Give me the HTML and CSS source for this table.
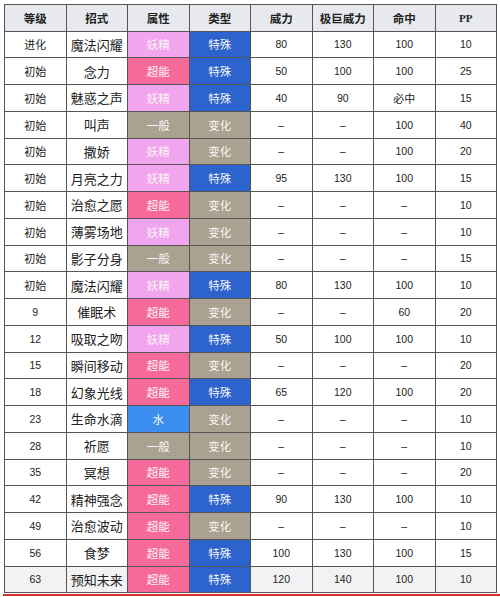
FILE: index.html
```html
<!DOCTYPE html>
<html lang="zh">
<head>
<meta charset="utf-8">
<link rel="stylesheet" href="styles.css">
</head>
<body>
<div class="wrap">
<table class="moves">
<thead>
<tr><th>等级</th><th>招式</th><th>属性</th><th>类型</th><th>威力</th><th>极巨威力</th><th>命中</th><th class="pp">PP</th></tr>
</thead>
<tbody>
<tr><td class="lv">进化</td><td class="nm">魔法闪耀</td><td class="t fairy">妖精</td><td class="t sp">特殊</td><td class="n">80</td><td class="n">130</td><td class="n">100</td><td class="n">10</td></tr>
<tr><td class="lv">初始</td><td class="nm">念力</td><td class="t psy">超能</td><td class="t sp">特殊</td><td class="n">50</td><td class="n">100</td><td class="n">100</td><td class="n">25</td></tr>
<tr><td class="lv">初始</td><td class="nm">魅惑之声</td><td class="t fairy">妖精</td><td class="t sp">特殊</td><td class="n">40</td><td class="n">90</td><td class="lv">必中</td><td class="n">15</td></tr>
<tr><td class="lv">初始</td><td class="nm">叫声</td><td class="t nor">一般</td><td class="t st">变化</td><td class="n">–</td><td class="n">–</td><td class="n">100</td><td class="n">40</td></tr>
<tr><td class="lv">初始</td><td class="nm">撒娇</td><td class="t fairy">妖精</td><td class="t st">变化</td><td class="n">–</td><td class="n">–</td><td class="n">100</td><td class="n">20</td></tr>
<tr><td class="lv">初始</td><td class="nm">月亮之力</td><td class="t fairy">妖精</td><td class="t sp">特殊</td><td class="n">95</td><td class="n">130</td><td class="n">100</td><td class="n">15</td></tr>
<tr><td class="lv">初始</td><td class="nm">治愈之愿</td><td class="t psy">超能</td><td class="t st">变化</td><td class="n">–</td><td class="n">–</td><td class="n">–</td><td class="n">10</td></tr>
<tr><td class="lv">初始</td><td class="nm">薄雾场地</td><td class="t fairy">妖精</td><td class="t st">变化</td><td class="n">–</td><td class="n">–</td><td class="n">–</td><td class="n">10</td></tr>
<tr><td class="lv">初始</td><td class="nm">影子分身</td><td class="t nor">一般</td><td class="t st">变化</td><td class="n">–</td><td class="n">–</td><td class="n">–</td><td class="n">15</td></tr>
<tr><td class="lv">初始</td><td class="nm">魔法闪耀</td><td class="t fairy">妖精</td><td class="t sp">特殊</td><td class="n">80</td><td class="n">130</td><td class="n">100</td><td class="n">10</td></tr>
<tr><td class="n">9</td><td class="nm">催眠术</td><td class="t psy">超能</td><td class="t st">变化</td><td class="n">–</td><td class="n">–</td><td class="n">60</td><td class="n">20</td></tr>
<tr><td class="n">12</td><td class="nm">吸取之吻</td><td class="t fairy">妖精</td><td class="t sp">特殊</td><td class="n">50</td><td class="n">100</td><td class="n">100</td><td class="n">10</td></tr>
<tr><td class="n">15</td><td class="nm">瞬间移动</td><td class="t psy">超能</td><td class="t st">变化</td><td class="n">–</td><td class="n">–</td><td class="n">–</td><td class="n">20</td></tr>
<tr><td class="n">18</td><td class="nm">幻象光线</td><td class="t psy">超能</td><td class="t sp">特殊</td><td class="n">65</td><td class="n">120</td><td class="n">100</td><td class="n">20</td></tr>
<tr><td class="n">23</td><td class="nm">生命水滴</td><td class="t water">水</td><td class="t st">变化</td><td class="n">–</td><td class="n">–</td><td class="n">–</td><td class="n">10</td></tr>
<tr><td class="n">28</td><td class="nm">祈愿</td><td class="t nor">一般</td><td class="t st">变化</td><td class="n">–</td><td class="n">–</td><td class="n">–</td><td class="n">10</td></tr>
<tr><td class="n">35</td><td class="nm">冥想</td><td class="t psy">超能</td><td class="t st">变化</td><td class="n">–</td><td class="n">–</td><td class="n">–</td><td class="n">20</td></tr>
<tr><td class="n">42</td><td class="nm">精神强念</td><td class="t psy">超能</td><td class="t sp">特殊</td><td class="n">90</td><td class="n">130</td><td class="n">100</td><td class="n">10</td></tr>
<tr><td class="n">49</td><td class="nm">治愈波动</td><td class="t psy">超能</td><td class="t st">变化</td><td class="n">–</td><td class="n">–</td><td class="n">–</td><td class="n">10</td></tr>
<tr><td class="n">56</td><td class="nm">食梦</td><td class="t psy">超能</td><td class="t sp">特殊</td><td class="n">100</td><td class="n">130</td><td class="n">100</td><td class="n">15</td></tr>
<tr class="last"><td class="n">63</td><td class="nm">预知未来</td><td class="t psy">超能</td><td class="t sp">特殊</td><td class="n">120</td><td class="n">140</td><td class="n">100</td><td class="n">10</td></tr>
</tbody>
</table>
<div class="redline"></div>
</div>
</body>
</html>
```
FILE: styles.css
```css
html, body {
  margin: 0;
  padding: 0;
  background: #ffffff;
}
.wrap {
  padding: 4px 0 0 4px;
}
.moves {
  width: 493px;
  border-collapse: collapse;
  table-layout: fixed;
  font-family: "Noto Sans CJK SC", "Liberation Sans", sans-serif;
  color: #222;
}
.moves th,
.moves td {
  border: 1px solid #555;
  text-align: center;
  vertical-align: middle;
  padding: 0;
  overflow: hidden;
  white-space: nowrap;
}
.moves thead tr {
  height: 26.5px;
}
.moves th {
  background: #e8e9ee;
  font-size: 11.5px;
  font-weight: bold;
  color: #222;
}
.moves th.pp {
  font-family: "Liberation Serif", serif;
  font-size: 11px;
}
.moves tbody tr {
  height: 26.76px;
}
.moves td.lv {
  font-size: 11px;
}
.moves td.nm {
  font-size: 13px;
}
.moves td.n {
  font-family: "Liberation Sans", sans-serif;
  font-size: 10.5px;
}
.moves td.t {
  font-size: 11.5px;
  color: #fbf6f6;
}
.moves td.fairy { background: #f1a5ee; }
.moves td.psy { background: #f56a9a; }
.moves td.sp { background: #2c63cc; }
.moves td.st { background: #aba190; }
.moves td.nor { background: #aba190; }
.moves td.water { background: #3c8eef; }
.moves tr.last td {
  background: #f2f2f4;
}
.moves tr.last td.psy { background: #f56a9a; }
.moves tr.last td.sp { background: #2c63cc; }
.redline {
  height: 2px;
  background: #d8322e;
  margin-top: 1px;
  margin-left: -1px;
}
```
